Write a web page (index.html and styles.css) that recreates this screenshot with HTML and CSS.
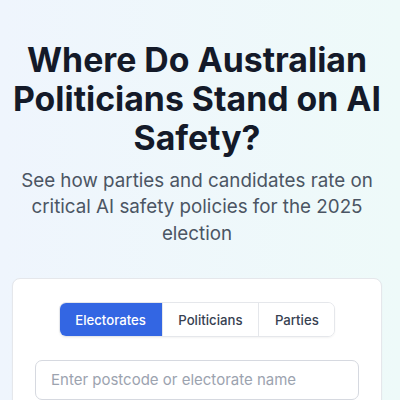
FILE: index.html
```html
<!DOCTYPE html>
<html lang="en">
<head>
<meta charset="utf-8">
<title>AI Safety Scorecard</title>
<link rel="stylesheet" href="styles.css">
</head>
<body>
<main class="page">
  <header class="hero">
    <h1 class="hero-title">Where Do Australian Politicians Stand on AI Safety?</h1>
    <p class="hero-sub">See how parties and candidates rate on critical AI safety policies for the 2025 election</p>
  </header>
  <section class="card">
    <div class="tabs-row">
      <div class="tabs">
        <button class="tab tab-active">Electorates</button>
        <button class="tab">Politicians</button>
        <button class="tab">Parties</button>
      </div>
    </div>
    <input class="search" type="text" placeholder="Enter postcode or electorate name">
  </section>
</main>
</body>
</html>
```
FILE: styles.css
```css
* { box-sizing: border-box; }
html, body { margin: 0; padding: 0; }
body {
  font-family: Inter, "Noto Sans", sans-serif;
  background: linear-gradient(to right, #eff5fd, #eefaf9);
  min-height: 400px;
  color: #111827;
}
.page {
  padding: 40px 18px 0 12px;
}
.hero {
  text-align: center;
}
.hero-title {
  margin: 0 -6px;
  font-size: 33.8px;
  line-height: 39px;
  font-weight: 700;
  color: #141a29;
}
.hero-sub {
  margin: 11px 0 0;
  font-size: 18.8px;
  line-height: 26.4px;
  color: #4b5563;
}
.card {
  margin-top: 31px;
  background: #ffffff;
  border: 1px solid #e5e7eb;
  border-radius: 8px;
  box-shadow: 0 1px 2px rgba(0,0,0,0.04);
  padding: 23px 22px;
}
.tabs-row {
  display: flex;
  justify-content: center;
  margin-bottom: 23px;
}
.tabs {
  display: flex;
  border: 1px solid #e5e7eb;
  border-radius: 7px;
  overflow: hidden;
  box-shadow: 0 1px 2px rgba(0,0,0,0.05);
}
.tab {
  font-family: inherit;
  font-size: 13.2px;
  line-height: 18px;
  font-weight: 500;
  color: #374151;
  background: #ffffff;
  border: 0;
  border-left: 1px solid #e5e7eb;
  padding: 7.5px 15.7px;
  margin: 0;
}
.tab:first-child { border-left: 0; }
.tab-active {
  background: #3366e3;
  color: #ffffff;
}
.search {
  display: block;
  width: 100%;
  font-family: inherit;
  font-size: 15px;
  line-height: 22.5px;
  padding: 7.5px 15px;
  border: 1px solid #d6d9e0;
  border-radius: 7px;
  background: #ffffff;
  color: #111827;
}
.search::placeholder { color: #9ca3af; }
```
